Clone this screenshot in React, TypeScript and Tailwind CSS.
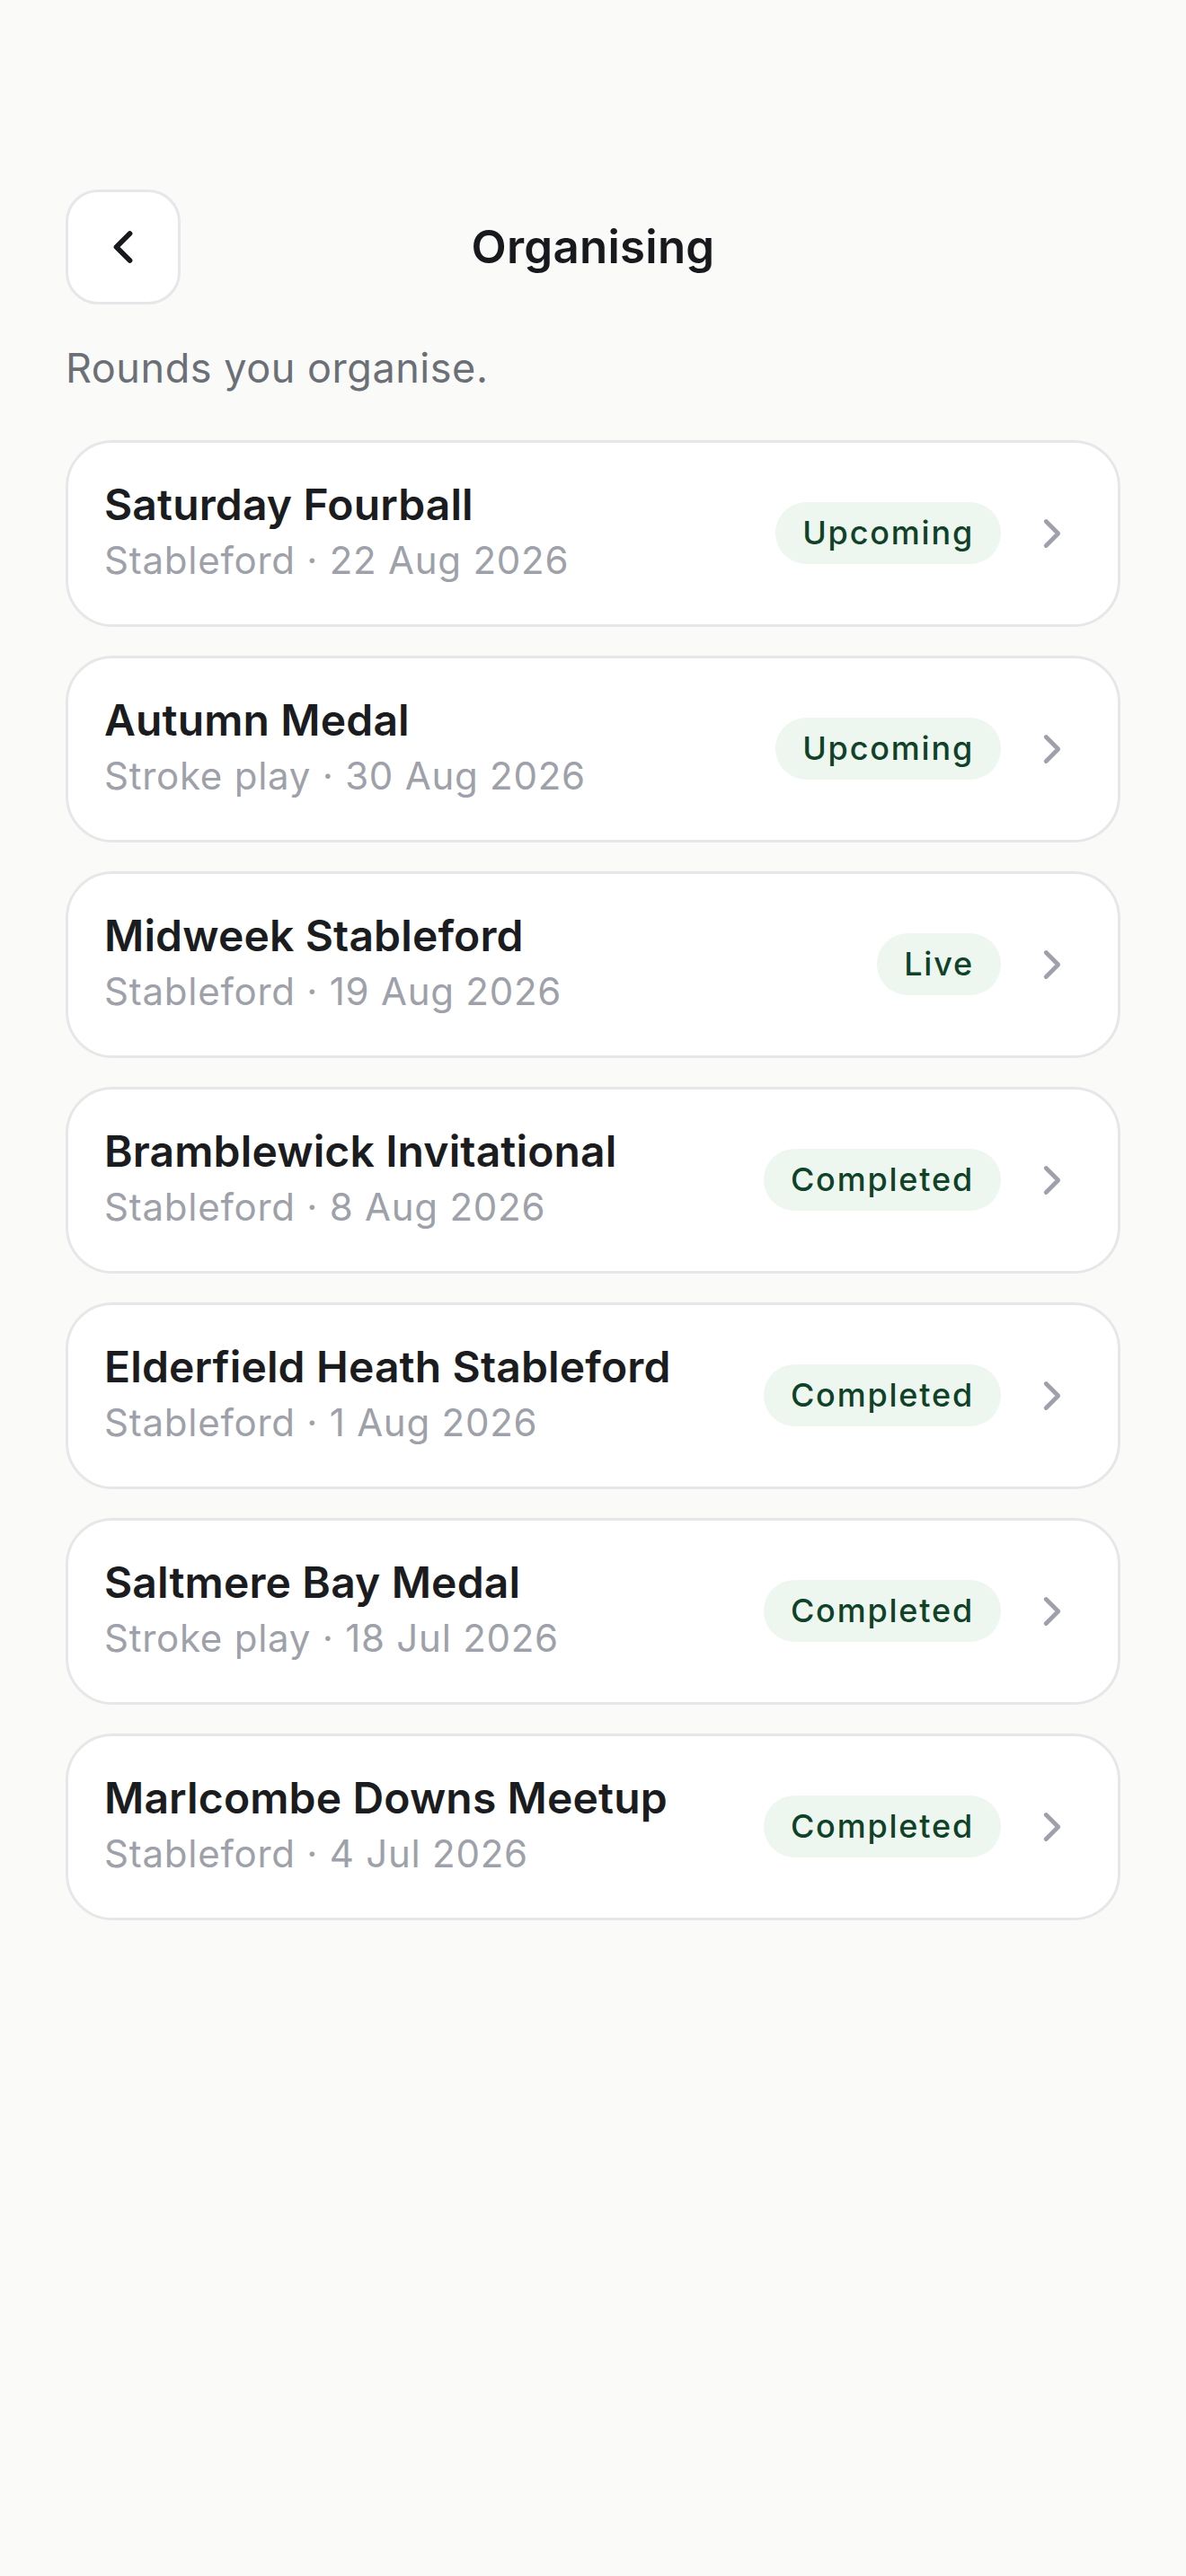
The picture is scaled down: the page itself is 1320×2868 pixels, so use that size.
import React from "react";
import { ChevronLeft, ChevronRight } from "lucide-react";

type Round = { name: string; meta: string; status: "Upcoming" | "Live" | "Completed" };

const rounds: Round[] = [
  { name: "Saturday Fourball", meta: "Stableford · 22 Aug 2026", status: "Upcoming" },
  { name: "Autumn Medal", meta: "Stroke play · 30 Aug 2026", status: "Upcoming" },
  { name: "Midweek Stableford", meta: "Stableford · 19 Aug 2026", status: "Live" },
  { name: "Bramblewick Invitational", meta: "Stableford · 8 Aug 2026", status: "Completed" },
  { name: "Elderfield Heath Stableford", meta: "Stableford · 1 Aug 2026", status: "Completed" },
  { name: "Saltmere Bay Medal", meta: "Stroke play · 18 Jul 2026", status: "Completed" },
  { name: "Marlcombe Downs Meetup", meta: "Stableford · 4 Jul 2026", status: "Completed" },
];

function RoundCard({ r }: { r: Round }) {
  return (
    <div className="flex h-[208px] items-center rounded-[52px] border-[3px] border-[#e6e7e9] bg-white pl-[40px] pr-[46px]">
      <div className="flex min-w-0 flex-1 flex-col">
        <div className="text-[48px] font-semibold leading-[60px] tracking-[0.003em] text-[#1b1c20]">{r.name}</div>
        <div className="text-[42px] leading-[63px] tracking-[0.018em] text-[#9ea1a9]">{r.meta}</div>
      </div>
      <div className="ml-4 flex items-center">
        <span className="rounded-full bg-[#edf6ef] px-[30px] py-[12px] text-[36px] font-medium leading-[45px] tracking-[0.05em] text-[#0f4229]">
          {r.status}
        </span>
        <ChevronRight className="ml-[30px] text-[#9ea1a9]" size={54} strokeWidth={2.1} />
      </div>
    </div>
  );
}

export default function App() {
  return (
    <div
      className="min-h-screen bg-[#fafaf9] px-[73px] pt-[211px]"
      style={{ fontFamily: "Inter, 'Noto Sans', sans-serif" }}
    >
      <div className="grid grid-cols-[128px_1fr_128px] items-center">
        <button className="flex h-[128px] w-[128px] items-center justify-center rounded-[36px] border-[3px] border-[#e6e7e9] bg-white text-[#18191c]">
          <ChevronLeft size={60} strokeWidth={2.3} />
        </button>
        <h1 className="text-center text-[51px] font-semibold leading-[64px] tracking-[0.005em] text-[#18191c]">Organising</h1>
        <div />
      </div>
      <p className="mt-[37px] text-[45px] leading-[67.5px] tracking-[0.012em] text-[#6b6f76]">Rounds you organise.</p>
      <div className="mt-[46px] flex flex-col gap-[32px]">
        {rounds.map((r) => (
          <RoundCard key={r.name} r={r} />
        ))}
      </div>
    </div>
  );
}
